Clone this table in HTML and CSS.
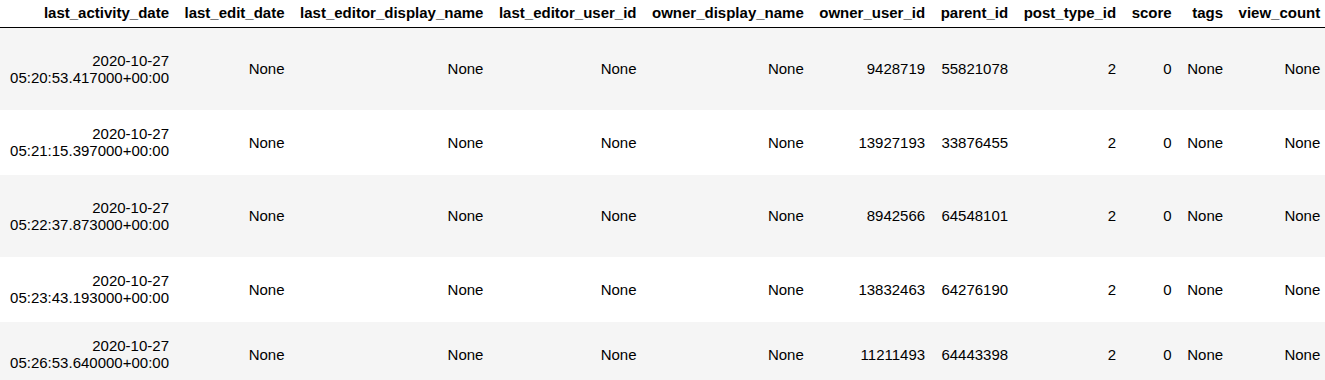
FILE: index.html
```html
<!DOCTYPE html>
<html lang="en">
<head>
    <meta charset="UTF-8">
    <meta name="viewport" content="width=device-width, initial-scale=1.0">
    <title>posts dataframe</title>
    <link rel="stylesheet" href="styles.css">
</head>
<body>
    <div class="output">
        <table class="dataframe">
            <thead>
                <tr>
                    <th>last_activity_date</th>
                    <th>last_edit_date</th>
                    <th>last_editor_display_name</th>
                    <th>last_editor_user_id</th>
                    <th>owner_display_name</th>
                    <th>owner_user_id</th>
                    <th>parent_id</th>
                    <th>post_type_id</th>
                    <th>score</th>
                    <th>tags</th>
                    <th>view_count</th>
                </tr>
            </thead>
            <tbody>
                <tr class="tall">
                    <td>2020-10-27 05:20:53.417000+00:00</td>
                    <td>None</td>
                    <td>None</td>
                    <td>None</td>
                    <td>None</td>
                    <td>9428719</td>
                    <td>55821078</td>
                    <td>2</td>
                    <td>0</td>
                    <td>None</td>
                    <td>None</td>
                </tr>
                <tr class="short">
                    <td>2020-10-27 05:21:15.397000+00:00</td>
                    <td>None</td>
                    <td>None</td>
                    <td>None</td>
                    <td>None</td>
                    <td>13927193</td>
                    <td>33876455</td>
                    <td>2</td>
                    <td>0</td>
                    <td>None</td>
                    <td>None</td>
                </tr>
                <tr class="tall">
                    <td>2020-10-27 05:22:37.873000+00:00</td>
                    <td>None</td>
                    <td>None</td>
                    <td>None</td>
                    <td>None</td>
                    <td>8942566</td>
                    <td>64548101</td>
                    <td>2</td>
                    <td>0</td>
                    <td>None</td>
                    <td>None</td>
                </tr>
                <tr class="short">
                    <td>2020-10-27 05:23:43.193000+00:00</td>
                    <td>None</td>
                    <td>None</td>
                    <td>None</td>
                    <td>None</td>
                    <td>13832463</td>
                    <td>64276190</td>
                    <td>2</td>
                    <td>0</td>
                    <td>None</td>
                    <td>None</td>
                </tr>
                <tr class="short">
                    <td>2020-10-27 05:26:53.640000+00:00</td>
                    <td>None</td>
                    <td>None</td>
                    <td>None</td>
                    <td>None</td>
                    <td>11211493</td>
                    <td>64443398</td>
                    <td>2</td>
                    <td>0</td>
                    <td>None</td>
                    <td>None</td>
                </tr>
            </tbody>
        </table>
    </div>
</body>
</html>
```

FILE: styles.css
```css
body {
    margin: 0;
    background: #fff;
    font-family: "Liberation Sans", Arial, sans-serif;
    font-size: 15px;
    color: #000;
    overflow: hidden;
}
/* the frame runs a little past the right edge */
.output {
    margin-right: -3px;
}
.dataframe {
    border-collapse: collapse;
    border-spacing: 0;
}
.dataframe thead {
    border-bottom: 1px solid #000;
    vertical-align: bottom;
}
.dataframe th {
    font-weight: bold;
    text-align: right;
    padding: 4px 7.75px 6px;
    line-height: normal;
    white-space: nowrap;
}
.dataframe td {
    text-align: right;
    vertical-align: middle;
    padding: 7.5px 7.75px;
    line-height: normal;
}
.dataframe tbody tr:nth-child(odd) {
    background: #f5f5f5;
}
.dataframe tr.tall {
    height: 82px;
}
.dataframe tr.short {
    height: 65px;
}
```
